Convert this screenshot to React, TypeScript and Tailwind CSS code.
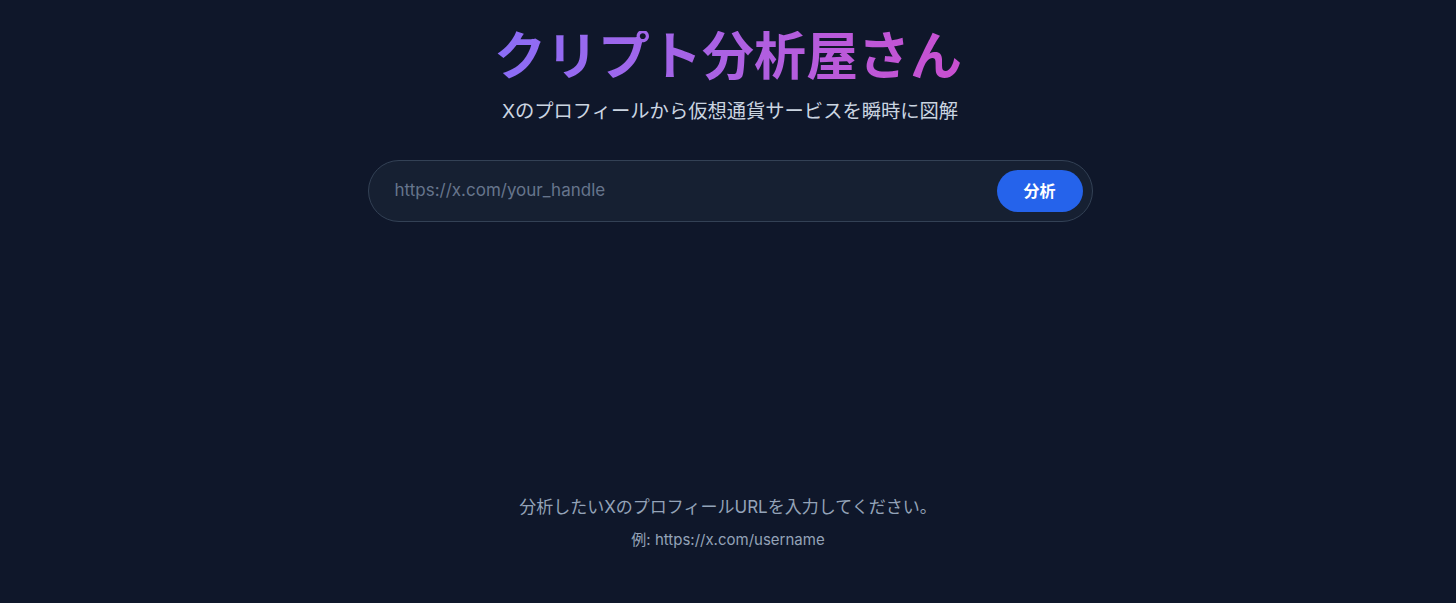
export default function App() {
  return (
    <div
      className="min-h-[603px] w-full bg-[#0f172a] flex flex-col items-center"
      style={{ fontFamily: 'Inter, "Noto Sans CJK JP", sans-serif' }}
    >
      <h1 className="mt-[31px] text-[52px] leading-[52px] font-semibold bg-gradient-to-r from-[#8a6df6] to-[#c94fd0] bg-clip-text text-transparent">
        クリプト分析屋さん
      </h1>
      <p className="mt-[14px] ml-[4px] text-[19.3px] leading-[28px] text-[#cbd5e1]">
        Xのプロフィールから仮想通貨サービスを瞬時に図解
      </p>
      <div className="mt-[35px] ml-[4px] w-[725px] h-[62px] rounded-full border border-[#334155] bg-[#162032] flex items-center pl-[26px] pr-[9px]">
        <input
          className="flex-1 bg-transparent outline-none text-[17px] text-[#e2e8f0] placeholder:text-[#66758c]"
          placeholder="https://x.com/your_handle"
        />
        <button className="w-[86px] h-[42px] rounded-full bg-[#2563eb] text-white font-bold text-[16px]">
          分析
        </button>
      </div>
      <p className="mt-[273px] text-[17px] leading-[24px] text-[#94a3b8]">
        分析したいXのプロフィールURLを入力してください。
      </p>
      <p className="mt-[11px] text-[15px] leading-[20px] text-[#94a3b8]">
        例: https://x.com/username
      </p>
    </div>
  );
}
